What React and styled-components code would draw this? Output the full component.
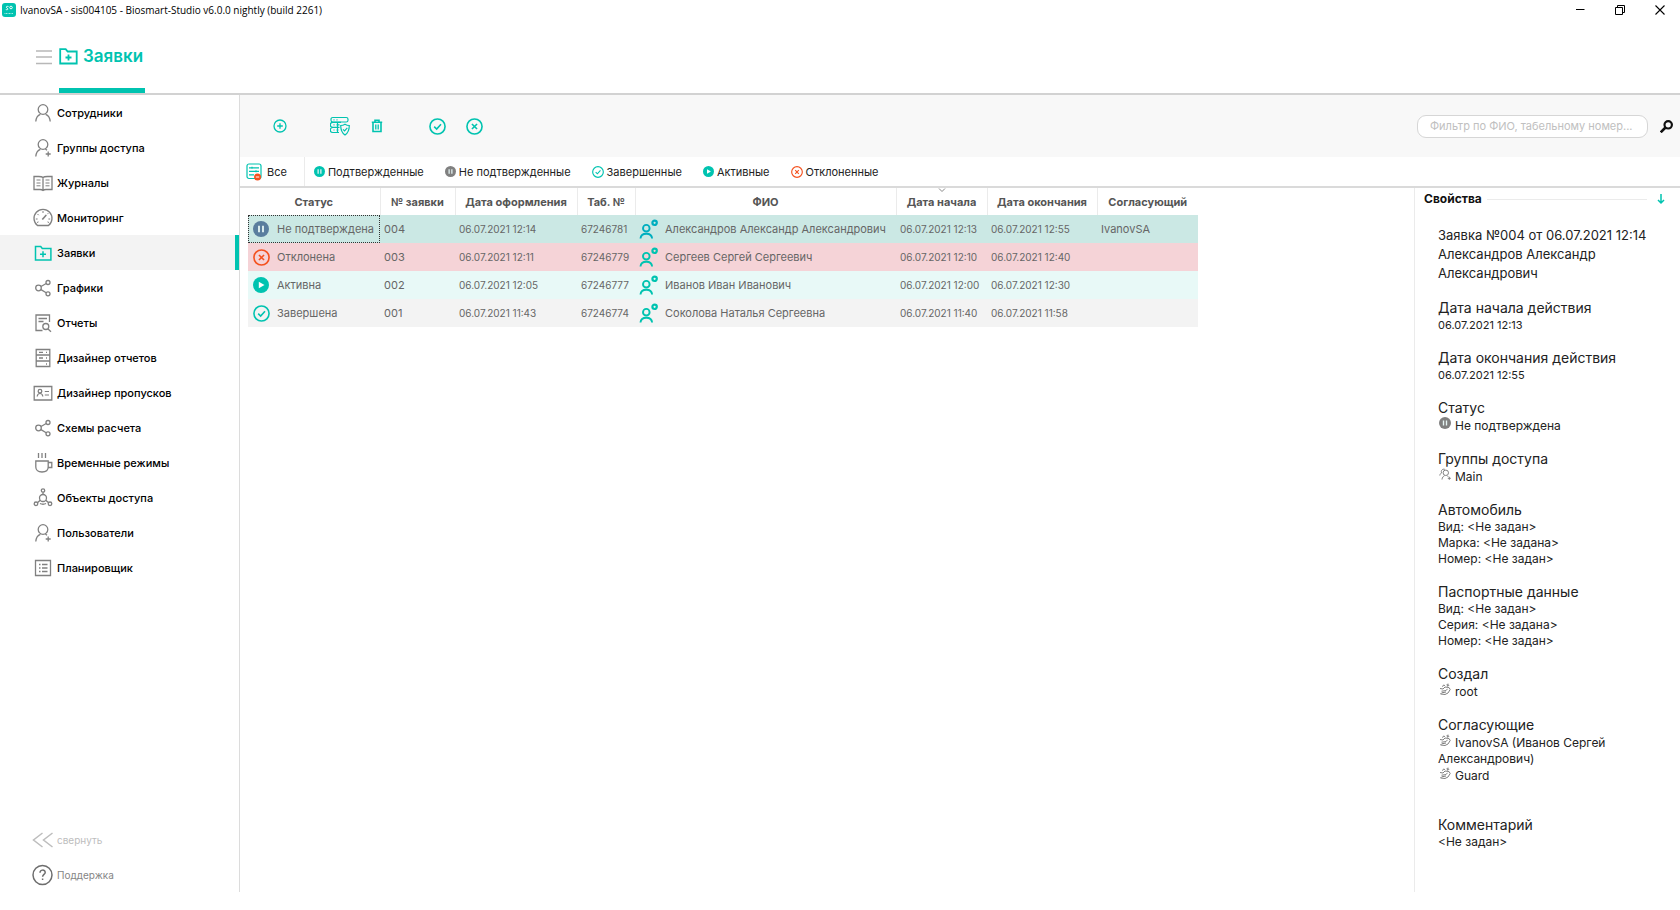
import React from "react";
import styled, { createGlobalStyle, css } from "styled-components";

const c = {
  teal: "#00c3b0",
  red: "#f4511e",
  grey: "#808080",
  line: "#d2d2d2",
  soft: "#ebebeb",
};

const GlobalStyle = createGlobalStyle`
  * { box-sizing: border-box; }
  body { margin: 0; background: #fff; color: #222; font: 11px/16px Inter, "Noto Sans", sans-serif; }
  button, input { font: inherit; color: inherit; }
  button { border: 0; padding: 0; background: none; cursor: pointer; }
  a { color: inherit; text-decoration: none; }
  svg { display: block; flex: none; }
`;

/* ---------- layout ---------- */
const Page = styled.div`
  min-height: 100vh;
  display: flex;
  flex-direction: column;
  padding-bottom: 18px;
`;
const TitleBar = styled.header`
  height: 20px;
  display: flex;
  align-items: center;
  padding-left: 2px;
  gap: 4px;
  color: #000;
  font: 10px/18px "Open Sans", "Noto Sans", sans-serif;
`;
const WindowButtons = styled.div`
  margin-left: auto;
  display: flex;
`;
const WindowButton = styled.button`
  width: 40px;
  height: 18px;
  display: grid;
  place-items: center;
`;
const Header = styled.div`
  height: 75px;
  display: flex;
  padding-left: 35px;
  gap: 6px;
  border-bottom: 2px solid ${c.line};
`;
const MenuButton = styled.button`
  width: 18px;
`;
const Tab = styled.a`
  display: flex;
  align-items: center;
  gap: 5px;
  padding: 4px 2px 0 0;
  border-bottom: 5px solid ${c.teal};
  color: ${c.teal};
  font-size: 17px;
  font-weight: 600;
`;
const Body = styled.div`
  flex: 1;
  display: flex;
`;
const Sidebar = styled.nav`
  width: 240px;
  flex: none;
  display: flex;
  flex-direction: column;
  border-right: 1px solid #dcdcdc;
`;
const NavItem = styled.a`
  height: 35px;
  display: flex;
  align-items: center;
  gap: 3px;
  padding-left: 32px;
  color: #000;
  font-weight: 500;
  svg { color: ${c.grey}; }
  ${(p) => p.$active && css`
    background: #f3f3f3;
    border-right: 4px solid ${c.teal};
    svg { color: ${c.teal}; }
  `}
`;
const SidebarFooter = styled.div`
  margin-top: auto;
  display: flex;
  flex-direction: column;
`;
const FooterItem = styled.button`
  height: 35px;
  display: flex;
  align-items: center;
  gap: 3px;
  padding-left: 32px;
  font-size: 10px;
  color: ${(p) => (p.$muted ? "#bdbdbd" : "#858585")};
`;
const Main = styled.main`
  flex: 1;
  min-width: 0;
  display: flex;
  flex-direction: column;
`;
const Toolbar = styled.div`
  height: 62px;
  display: flex;
  align-items: center;
  gap: 36px;
  padding: 0 7px 0 28px;
  background: #f8f8f8;
`;
const ToolGroup = styled.div`
  display: flex;
  gap: 13px;
`;
const ToolButton = styled.button`
  width: 24px;
  height: 24px;
  display: grid;
  place-items: center;
  color: ${c.teal};
`;
const Search = styled.form`
  margin-left: auto;
  display: flex;
  align-items: center;
  gap: 12px;
`;
const SearchInput = styled.input`
  width: 231px;
  height: 23px;
  padding: 0 12px;
  border: 1px solid #d6d6d6;
  border-radius: 9px;
  background: #fff;
  outline: none;
  text-overflow: ellipsis;
  &::placeholder { color: #c0c0c0; opacity: 1; }
`;
const SearchButton = styled.button`
  color: #111;
`;
const Filters = styled.div`
  height: 31px;
  display: flex;
  align-items: center;
  gap: 21px;
  padding-left: 6px;
  border-bottom: 2px solid #dadada;
`;
const Filter = styled.button`
  display: flex;
  align-items: center;
  gap: 3px;
  color: #222;
`;
const FilterAll = styled(Filter)`
  align-self: stretch;
  gap: 4px;
  padding-right: 17px;
  margin-right: -12px;
  border-right: 1px solid ${c.soft};
`;
const Content = styled.div`
  flex: 1;
  display: flex;
`;
const Grid = styled.div`
  flex: 1;
  min-width: 0;
  padding-left: 8px;
`;
const Table = styled.table`
  width: 950px;
  table-layout: fixed;
  border-collapse: collapse;
  color: #666;
`;
const Th = styled.th`
  height: 27px;
  padding: 0;
  position: relative;
  color: #555;
  font-weight: 700;
  white-space: nowrap;
  & + & { border-left: 1px solid ${c.soft}; }
`;
const SortMark = styled.svg`
  position: absolute;
  top: 0;
  left: calc(50% - 4px);
`;
const Row = styled.tr`
  background: ${(p) => p.$bg};
`;
const Td = styled.td`
  height: 28px;
  padding: 0 0 0 4px;
  white-space: nowrap;
  font-size: ${(p) => (p.$compact ? "10px" : "11px")};
  ${(p) => p.$focused && css`outline: 1px dotted #333; outline-offset: -1px;`}
`;
const Cell = styled.div`
  display: flex;
  align-items: center;
  gap: ${(p) => (p.$tight ? "6px" : "7px")};
`;
const Panel = styled.aside`
  width: 266px;
  flex: none;
  border-left: 1px solid ${c.soft};
  padding-left: 9px;
`;
const PanelHead = styled.div`
  height: 22px;
  display: flex;
  align-items: center;
  gap: 5px;
  padding-right: 14px;
`;
const PanelTitle = styled.h2`
  margin: 0;
  color: #111;
  font-size: 12px;
  font-weight: 700;
`;
const PanelRule = styled.hr`
  flex: 1;
  margin: 0 4px 0 0;
  border: 0;
  border-top: 1px solid ${c.soft};
`;
const PanelBody = styled.div`
  display: flex;
  flex-direction: column;
  gap: 16px;
  padding: 16px 16px 0 14px;
`;
const Summary = styled.div`
  font-size: 13px;
  line-height: 19px;
`;
const Section = styled.section`
  font-size: 12px;
  ${(p) => p.$last && css`margin-top: 16px;`}
`;
const SectionTitle = styled.h3`
  margin: 0;
  font-size: 14px;
  line-height: 18px;
  font-weight: 400;
`;
const Line = styled.div`
  font-size: ${(p) => (p.$date ? "11px" : "12px")};
`;
const IconLine = styled.div`
  svg { display: inline-block; margin: 0 4px 0 1px; vertical-align: 1px; }
`;

/* ---------- icons ---------- */
const Svg = ({ s = 22, w = s, h = s, box, sw = 1.3, children, ...r }) => (
  <svg width={w} height={h} viewBox={box || `0 0 ${w} ${h}`} fill="none" stroke="currentColor" strokeWidth={sw} aria-hidden="true" {...r}>
    {children}
  </svg>
);
const person = <><circle cx="11" cy="7.5" r="4.8" /><path d="M3.8 19.500c.3-4.200 2.400-6.400 4.600-7.200M18.200 19.500c-.3-4.200-2.400-6.400-4.600-7.200" /></>;
const personPlus = <><circle cx="11" cy="7.500" r="4.800" /><path d="M3.800 19.500c.3-4.200 2.400-6.400 4.600-7.200M13.400 12l1.600 1.300M16.200 14.500v5M13.700 17h5" /></>;
const share = <><circle cx="6.500" cy="11" r="2.800" /><circle cx="16" cy="5.500" r="2" /><circle cx="16" cy="16.800" r="2" /><path d="M9 9.500l5.200-3M9 12.600l5.200 3.100" /></>;
const folder = <path d="M3.500 4.500h5.200l1.600 2h8.600v11.500h-15.400zM11 9.300v6M8 12.300h6" strokeWidth="1.5" />;
const navIcons = {
  person,
  personPlus,
  book: <><path d="M11 6.200v12M11 5.500c-1-1-2.500-1-4.500-1h-4.500v13h6c1.500 0 2.300.4 3 1 .7-.6 1.500-1 3-1h6v-13h-4.500c-2 0-3.500 0-4.500 1z" /><path d="M4.500 8h4M4.500 11h4M4.500 13.800h4M13.500 8h4M13.500 11h4M13.500 13.800h4" strokeWidth="1" /></>,
  gauge: <><path d="M5.500 18.500h11a9 9 0 1 0-11 0z" /><path d="M10.300 12.500l4-4.500" strokeWidth="1.600" /><path d="M11 4v2M5.500 7l1.200 1.200M3.800 12h1.800M16.400 12h1.800M15.300 7.200l1-1M5 15.500l1.500-.6M17 15.500l-1.500-.6" strokeWidth="1" /></>,
  folder,
  share,
  report: <><path d="M17.500 10v-7h-13.500v15.500h6.500M6.500 6.500h8.500M6.500 9.500h5" /><circle cx="13.800" cy="14.500" r="3" /><path d="M16 17l3 2.800" /></>,
  cabinet: <><path d="M4.200 2.500h13.600v17h-13.600zM4.200 8h13.600M4.200 14h13.600M7 5.300h4M7 11h4" /><path d="M14 5.300h1M14 11h1M14 17h1" /></>,
  badge: <><path d="M2.200 4.500h17.600v13.500h-17.600z" /><circle cx="8" cy="9.200" r="1.800" /><path d="M5.200 14.500c.2-2 1.200-3 2.800-3s2.600 1 2.800 3M12.800 9.500h4.200M12.800 13h4.200" strokeWidth="1.200" /></>,
  cup: <path d="M3.800 9h12.400v6c0 3-2 5-6.200 5s-6.200-2-6.200-5zM16.200 10.500h3.600v5h-4M6.500 1v5M10 1v5M13.500 1v5" />,
  nodes: <><circle cx="11" cy="11" r="3.500" /><circle cx="11" cy="3.500" r="1.700" /><circle cx="4" cy="16.800" r="1.800" /><circle cx="18" cy="16.800" r="1.800" /><path d="M11 5.200v2.300M8.200 13.300l-2.500 2.300M13.800 13.300l2.500 2.300M8 16.500c2 1 4 1 6 0" /></>,
  planner: <><path d="M3.500 3.500h15v15h-15z" /><path d="M7 7.500h1.500M7 11h1.500M7 14.500h1.500M10 7.500h5.500M10 11h5.500M10 14.500h5.500" /></>,
};
const Pause = ({ s = 11, color = c.teal }) => (
  <Svg s={s} box="0 0 16 16"><circle cx="8" cy="8" r="8" fill={color} stroke="none" /><path d="M6 4.800v6.400M10 4.800v6.400" stroke="#e6f5f4" strokeWidth="1.800" /></Svg>
);
const Play = ({ s = 11 }) => (
  <Svg s={s} box="0 0 16 16"><circle cx="8" cy="8" r="8" fill={c.teal} stroke="none" /><path d="M5.800 4.800l5.700 3.200-5.700 3.200z" fill="#fff" stroke="none" /></Svg>
);
const Check = ({ s = 12 }) => (
  <Svg s={s} box="0 0 18 18" sw="1.700" color={c.teal}><circle cx="9" cy="9" r="8" /><path d="M5.500 9.200l2.600 2.500 4.600-5" /></Svg>
);
const Cross = ({ s = 12, color = c.red }) => (
  <Svg s={s} box="0 0 18 18" sw="1.700" color={color}><circle cx="9" cy="9" r="8" /><path d="M6.300 6.300l5.400 5.400M11.700 6.300l-5.400 5.400" /></Svg>
);
const Employee = ({ color }) => (
  <Svg w={19} h={20} sw="1.900" color={color}>
    <circle cx="7.300" cy="9.200" r="3.300" /><path d="M1.500 19.500c.2-3.200 2.300-4.800 5.800-4.800s5.600 1.600 5.800 4.800" />
    <circle cx="15.600" cy="3.800" r="2.200" strokeWidth="2.200" />
  </Svg>
);
const SmallGroup = () => (
  <Svg s={12} sw="1" color={c.grey}><circle cx="6.800" cy="4.800" r="2.700" /><path d="M.8 7.500c.2-1.500 1-2.300 1.800-2.600-1-2 .5-4.300 3.200-3.600M3 11.500c.2-2 1.200-3.200 2.500-3.800M8.200 7.600l1 1.200M10.300 8.800v3M8.800 10.300h3" /></Svg>
);
const SmallUser = () => (
  <Svg s={12} sw="1" color={c.grey}><path d="M1 5.500l3 .5 2-2 4 .5 1.200 2-2.200 3.500-3 1.500-4.500-.5 1.500-1.500M2.500 8.200l4.500-.6 1.500-1.800M3.500 3.800l1-1.800 1.500.6M7.500 1.800l2.700.6M9 .6l-.4 3M3 9.800l4-.8" /></Svg>
);

/* ---------- data ---------- */
const nav = [
  ["Сотрудники", "person"], ["Группы доступа", "personPlus"], ["Журналы", "book"], ["Мониторинг", "gauge"],
  ["Заявки", "folder"], ["Графики", "share"], ["Отчеты", "report"], ["Дизайнер отчетов", "cabinet"],
  ["Дизайнер пропусков", "badge"], ["Схемы расчета", "share"], ["Временные режимы", "cup"],
  ["Объекты доступа", "nodes"], ["Пользователи", "personPlus"], ["Планировщик", "planner"],
];
const filters = [
  ["Подтвержденные", <Pause />], ["Не подтвержденные", <Pause color={c.grey} />], ["Завершенные", <Check />],
  ["Активные", <Play />], ["Отклоненные", <Cross />],
];
const columns = [
  ["Статус", 132], ["№ заявки", 75], ["Дата оформления", 122], ["Таб. №", 58], ["ФИО", 261],
  ["Дата начала", 91], ["Дата окончания", 110], ["Согласующий", 101],
];
const rows = [
  { bg: "#cbe8e4", icon: <Pause s={16} color="#5a7d9e" />, status: "Не подтверждена", no: "004", made: "06.07.2021 12:14", tab: "67246781", name: "Александров Александр Александрович", from: "06.07.2021 12:13", to: "06.07.2021 12:55", by: "IvanovSA", person: "#00aebf", focused: true },
  { bg: "#f5d3d7", icon: <Cross s={17} />, status: "Отклонена", no: "003", made: "06.07.2021 12:11", tab: "67246779", name: "Сергеев Сергей Сергеевич", from: "06.07.2021 12:10", to: "06.07.2021 12:40" },
  { bg: "#e8f9f7", icon: <Play s={16} />, status: "Активна", no: "002", made: "06.07.2021 12:05", tab: "67246777", name: "Иванов Иван Иванович", from: "06.07.2021 12:00", to: "06.07.2021 12:30" },
  { bg: "#f3f3f3", icon: <Check s={17} />, status: "Завершена", no: "001", made: "06.07.2021 11:43", tab: "67246774", name: "Соколова Наталья Сергеевна", from: "06.07.2021 11:40", to: "06.07.2021 11:58" },
];
const IconSlot = styled.span`
  width: 18px;
  display: grid;
  place-items: center;
`;

export default function App() {
  return (
    <Page>
      <GlobalStyle />
      <TitleBar>
        <svg width="14" height="14" viewBox="0 0 14 14" aria-hidden="true">
          <rect width="14" height="14" rx="3" fill={c.teal} />
          <path d="M6.500 3.600c-1.800-.8-3 .6-1.500 1.400s1 2.300-1.200 1.500" fill="none" stroke="#fff" strokeWidth="1" />
          <circle cx="9" cy="4.500" r="1.300" fill="none" stroke="#fff" strokeWidth=".9" />
          <path d="M2.500 10.500h9" stroke="#a8ebe4" strokeWidth="1" strokeDasharray="1 .5" />
        </svg>
        <span>IvanovSA - sis004105 - Biosmart-Studio v6.0.0 nightly (build 2261)</span>
        <WindowButtons>
          <WindowButton aria-label="Свернуть окно"><Svg s={10} sw="1"><path d="M1 4.500h8.500" /></Svg></WindowButton>
          <WindowButton aria-label="Восстановить"><Svg s={10} sw="1"><path d="M.5 2.500h7v7h-7zM2.500 2.500v-2h7v7h-2" /></Svg></WindowButton>
          <WindowButton aria-label="Закрыть"><Svg s={10} sw="1.100"><path d="M.5.5l9 9M9.500.5l-9 9" /></Svg></WindowButton>
        </WindowButtons>
      </TitleBar>

      <Header>
        <MenuButton aria-label="Меню">
          <Svg w={18} h={16} color="#b8b8b8" sw="1.500"><path d="M1 2h16M1 8h16M1 14.500h16" /></Svg>
        </MenuButton>
        <Tab href="#requests">
          <Svg w={19} h={17} sw="1.800"><path d="M1.200 1.200h5.500l2 2.300h9v12h-16.500zM9.500 6.500v6M6.500 9.500h6" /></Svg>
          Заявки
        </Tab>
      </Header>

      <Body>
        <Sidebar>
          {nav.map(([label, icon]) => (
            <NavItem key={label} href="#" $active={label === "Заявки"}>
              <Svg>{navIcons[icon]}</Svg>
              {label}
            </NavItem>
          ))}
          <SidebarFooter>
            <FooterItem $muted>
              <Svg sw="1.500"><path d="M10.500 4l-9 7 9 7M20.500 4l-9 7 9 7" /></Svg>
              свернуть
            </FooterItem>
            <FooterItem>
              <Svg sw="1.500" color="#6e6e6e"><circle cx="10.500" cy="11" r="9.500" /><path d="M8 8.800c0-3.600 5.200-3.400 5.200-.4 0 1.900-2.600 2.200-2.600 4.300M10.600 14.500v1.600" /></Svg>
              Поддержка
            </FooterItem>
          </SidebarFooter>
        </Sidebar>

        <Main>
          <Toolbar>
            <ToolGroup>
              <ToolButton aria-label="Добавить"><Svg s={14}><circle cx="7" cy="7" r="6" /><path d="M7 4.200v5.600M4.200 7h5.600" /></Svg></ToolButton>
            </ToolGroup>
            <ToolGroup>
              <ToolButton aria-label="Журнал согласования">
                <Svg s={20} sw="1.200">
                  <rect x="1" y="1.500" width="17" height="4.500" rx="1.800" />
                  <path d="M11 6.300h-8.200a1.800 1.800 0 0 0 0 5h6.700M9.500 11.500h-6.700a1.800 1.800 0 0 0 0 5h6.200M3.500 3.800h1M6.500 3.800h1M3.500 8.800h1M6.500 8.800h3M3.500 14h1M6.500 14h2M7.500 6v10" />
                  <path d="M15 8.200c1.500 1 3 1.300 4.300 1.300 0 4-.8 7.200-4.300 9.500-3.500-2.300-4.300-5.500-4.300-9.500 1.300 0 2.800-.3 4.300-1.300zM13 13.300l1.600 1.600 2.700-3" />
                </Svg>
              </ToolButton>
              <ToolButton aria-label="Удалить"><Svg w={12} h={14} sw="1.600"><path d="M.8 3.300h10.400M4 3v-1.700h4v1.700M2 3.500v9h8v-9" /><path d="M4.800 5.500v5M7.200 5.500v5" strokeWidth="1.300" /></Svg></ToolButton>
            </ToolGroup>
            <ToolGroup>
              <ToolButton aria-label="Согласовать"><Check s={17} /></ToolButton>
              <ToolButton aria-label="Отклонить"><Cross s={17} color={c.teal} /></ToolButton>
            </ToolGroup>
            <Search>
              <SearchInput type="text" aria-label="Фильтр" placeholder="Фильтр по ФИО, табельному номер..." />
              <SearchButton type="button" aria-label="Найти"><Svg s={13} sw="2.200"><circle cx="8.200" cy="4.800" r="3.700" /><path d="M5.500 7.500l-4.800 4.800" strokeWidth="2.600" /></Svg></SearchButton>
            </Search>
          </Toolbar>

          <Filters>
            <FilterAll>
              <Svg w={17} h={18} color={c.teal} sw="1.200">
                <rect x="1" y="1" width="14" height="14.500" rx="2" />
                <path d="M3 4.800h10M3 8.300h10M3 11.800h5M6 3.800v2M10 7.300v2" />
                <circle cx="11.500" cy="14" r="3.500" fill={c.red} stroke="none" />
                <path d="M9.800 14h3.400" stroke="#fff" strokeWidth="1" />
              </Svg>
              Все
            </FilterAll>
            {filters.map(([label, icon]) => <Filter key={label}>{icon}{label}</Filter>)}
          </Filters>

          <Content>
            <Grid>
              <Table>
                <colgroup>{columns.map(([t, w]) => <col key={t} width={w} />)}</colgroup>
                <thead>
                  <tr>
                    {columns.map(([t]) => (
                      <Th key={t}>
                        {t === "Дата начала" && <SortMark width="8" height="5" fill="none" stroke="#888"><path d="M1 .5l3 3 3-3" /></SortMark>}
                        {t}
                      </Th>
                    ))}
                  </tr>
                </thead>
                <tbody>
                  {rows.map((r) => (
                    <Row key={r.no} $bg={r.bg}>
                      <Td $focused={r.focused}><Cell><IconSlot>{r.icon}</IconSlot>{r.status}</Cell></Td>
                      <Td>{r.no}</Td>
                      <Td $compact>{r.made}</Td>
                      <Td $compact>{r.tab}</Td>
                      <Td><Cell><Employee color={r.person || c.teal} />{r.name}</Cell></Td>
                      <Td $compact>{r.from}</Td>
                      <Td $compact>{r.to}</Td>
                      <Td>{r.by}</Td>
                    </Row>
                  ))}
                </tbody>
              </Table>
            </Grid>

            <Panel>
              <PanelHead>
                <PanelTitle>Свойства</PanelTitle>
                <PanelRule />
                <button aria-label="Свернуть панель">
                  <Svg w={10} h={12} color={c.teal} sw="1.500"><path d="M5 1v9M2 7l3 3 3-3" /></Svg>
                </button>
              </PanelHead>
              <PanelBody>
                <Summary>Заявка №004 от 06.07.2021 12:14<br />Александров Александр Александрович</Summary>
                <Section><SectionTitle>Дата начала действия</SectionTitle><Line $date>06.07.2021 12:13</Line></Section>
                <Section><SectionTitle>Дата окончания действия</SectionTitle><Line $date>06.07.2021 12:55</Line></Section>
                <Section><SectionTitle>Статус</SectionTitle><IconLine><Pause s={12} color={c.grey} />Не подтверждена</IconLine></Section>
                <Section><SectionTitle>Группы доступа</SectionTitle><IconLine><SmallGroup />Main</IconLine></Section>
                <Section>
                  <SectionTitle>Автомобиль</SectionTitle>
                  <Line>Вид: &lt;Не задан&gt;</Line><Line>Марка: &lt;Не задана&gt;</Line><Line>Номер: &lt;Не задан&gt;</Line>
                </Section>
                <Section>
                  <SectionTitle>Паспортные данные</SectionTitle>
                  <Line>Вид: &lt;Не задан&gt;</Line><Line>Серия: &lt;Не задана&gt;</Line><Line>Номер: &lt;Не задан&gt;</Line>
                </Section>
                <Section><SectionTitle>Создал</SectionTitle><IconLine><SmallUser />root</IconLine></Section>
                <Section>
                  <SectionTitle>Согласующие</SectionTitle>
                  <IconLine><SmallUser />IvanovSA (Иванов Сергей Александрович)</IconLine>
                  <IconLine><SmallUser />Guard</IconLine>
                </Section>
                <Section $last><SectionTitle>Комментарий</SectionTitle><Line>&lt;Не задан&gt;</Line></Section>
              </PanelBody>
            </Panel>
          </Content>
        </Main>
      </Body>
    </Page>
  );
}
